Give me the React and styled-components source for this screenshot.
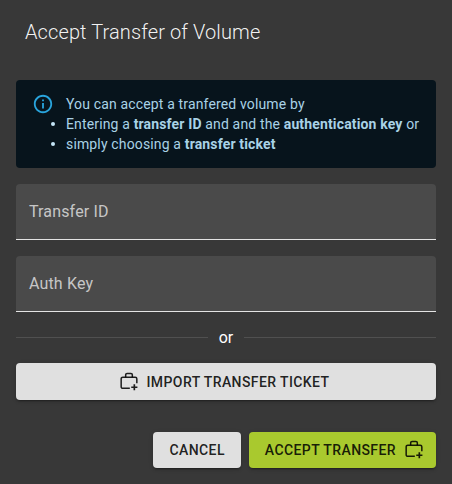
import React from "react";
import styled, { createGlobalStyle } from "styled-components";

const Global = createGlobalStyle`
  html, body { margin: 0; padding: 0; background: #383838; }
  * { box-sizing: border-box; }
`;

const Dialog = styled.div`
  width: 452px;
  height: 484px;
  background: #383838;
  font-family: Roboto, "Liberation Sans", sans-serif;
  color: #fff;
  display: flex;
  flex-direction: column;
  overflow: hidden;
`;

const Title = styled.h2`
  margin: 0;
  padding: 16px 24px 16px 25px;
  height: 64px;
  font-size: 20px;
  line-height: 32px;
  font-weight: 300;
  letter-spacing: 0.11px;
  color: rgba(255, 255, 255, 0.95);
`;

const Content = styled.div`
  padding: 16px 16px 0;
  display: flex;
  flex-direction: column;
`;

const Alert = styled.div`
  height: 88px;
  padding: 13px 16px;
  border-radius: 4px;
  background: #07141c;
  color: #a9d2e6;
  display: flex;
  font-size: 14px;
  line-height: 20px;
`;

const AlertIcon = styled.svg`
  width: 22px;
  height: 22px;
  flex: none;
  margin: 0 12px 0 0;
  color: #29a4dc;
`;

const AlertBody = styled.div`
  padding-top: 1px;
  font-size: 14px;
  font-weight: 400;
  letter-spacing: 0.15px;
  line-height: 20px;
  white-space: nowrap;
`;

const List = styled.ul`
  margin: 0;
  padding: 0;
  list-style: none;
`;

const Item = styled.li`
  position: relative;
  &::before {
    content: "";
    position: absolute;
    left: -15px;
    top: 8px;
    width: 4px;
    height: 4px;
    border-radius: 50%;
    background: #c4e6f7;
  }
`;

const Strong = styled.b`
  font-weight: 700;
`;

const Field = styled.div`
  height: 56px;
  margin-top: 16px;
  padding: 0 13px;
  background: #4a4a4a;
  border-radius: 4px 4px 0 0;
  border-bottom: 1px solid #e4e4e4;
  color: rgba(255, 255, 255, 0.7);
  font-size: 16px;
  letter-spacing: 0.15px;
  display: flex;
  align-items: center;
`;

const Divider = styled.div`
  height: 51px;
  display: flex;
  align-items: center;
  gap: 11px;
  font-size: 16px;
  &::before, &::after {
    content: "";
    flex: 1;
    height: 1px;
    background: #505050;
  }
`;

const Button = styled.button`
  height: ${(p) => p.$h}px;
  border: 0;
  border-radius: 4px;
  background: ${(p) => (p.$primary ? "#a9c92e" : "#e0e0e0")};
  color: rgba(0, 0, 0, 0.87);
  font-family: inherit;
  font-size: 14px;
  font-weight: 500;
  letter-spacing: 0.4px;
  text-transform: uppercase;
  display: flex;
  align-items: center;
  justify-content: center;
  padding: 0 16px;
  box-shadow: 0 3px 1px -2px rgba(0,0,0,.2), 0 2px 2px 0 rgba(0,0,0,.14), 0 1px 5px 0 rgba(0,0,0,.12);
`;

const FullButton = styled(Button)`
  width: 100%;
`;

const Actions = styled.div`
  display: flex;
  justify-content: flex-end;
  gap: 8px;
  padding: 32px 16px 16px;
`;

const Icon = styled.svg`
  width: 20px;
  height: 20px;
  flex: none;
  margin: ${(p) => (p.$end ? "0 -4px 0 8px" : "0 8px 0 -4px")};
`;

function TicketIcon({ end }) {
  return (
    <Icon $end={end} viewBox="0 0 24 24" fill="none" stroke="currentColor" strokeWidth="1.8">
      <path d="M13 19.6H4.6a2 2 0 0 1-2-2V8.2a2 2 0 0 1 2-2h14.8a2 2 0 0 1 2 2v5.3" />
      <path d="M8 6.2V3.4a1.7 1.7 0 0 1 1.7-1.7h4.6A1.7 1.7 0 0 1 16 3.4v2.8" />
      <path d="M18.4 14.6v7.4M14.7 18.3h7.4" strokeWidth="2" />
    </Icon>
  );
}

export default function App() {
  return (
    <>
      <Global />
      <Dialog>
        <Title>Accept Transfer of Volume</Title>
        <Content>
          <Alert>
            <AlertIcon viewBox="0 0 24 24" fill="currentColor">
              <path d="M11 7h2v2h-2zm0 4h2v6h-2zm1-9C6.48 2 2 6.48 2 12s4.48 10 10 10 10-4.48 10-10S17.52 2 12 2zm0 18c-4.41 0-8-3.59-8-8s3.59-8 8-8 8 3.59 8 8-3.59 8-8 8z" />
            </AlertIcon>
            <AlertBody>
              You can accept a tranfered volume by
              <List>
                <Item>
                  Entering a <Strong>transfer ID</Strong> and and the <Strong>authentication key</Strong> or
                </Item>
                <Item>
                  simply choosing a <Strong>transfer ticket</Strong>
                </Item>
              </List>
            </AlertBody>
          </Alert>
          <Field>Transfer ID</Field>
          <Field>Auth Key</Field>
          <Divider>or</Divider>
          <FullButton $h={37}>
            <TicketIcon />
            Import Transfer Ticket
          </FullButton>
        </Content>
        <Actions>
          <Button $h={36}>Cancel</Button>
          <Button $h={36} $primary>
            Accept Transfer
            <TicketIcon end />
          </Button>
        </Actions>
      </Dialog>
    </>
  );
}
